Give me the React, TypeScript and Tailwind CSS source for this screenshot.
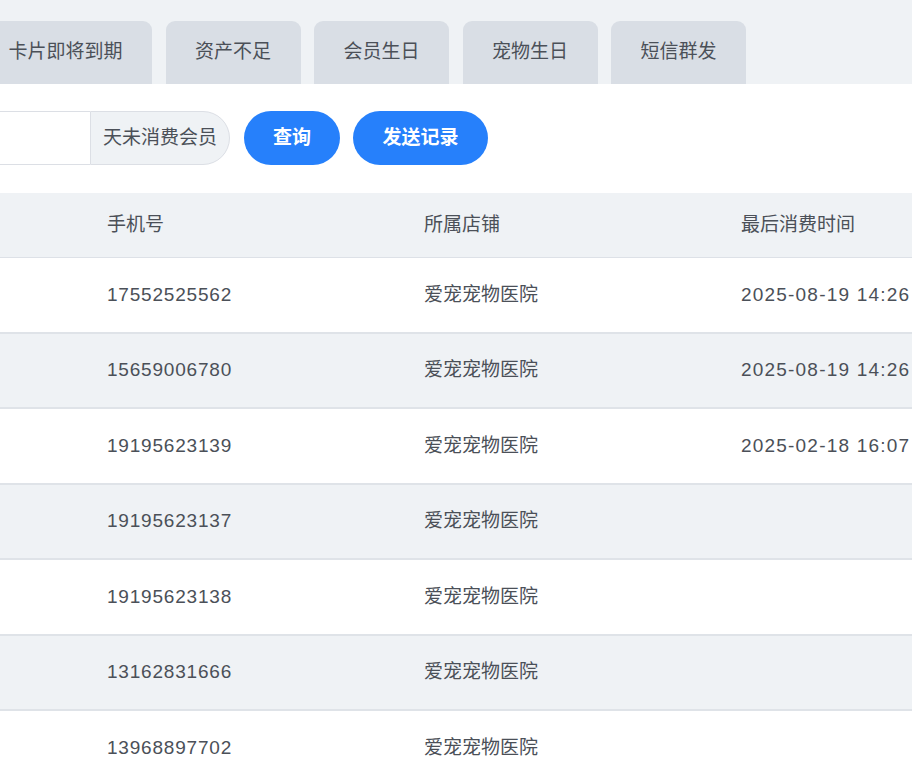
import React from "react";

const font = { fontFamily: '"Liberation Sans", "Noto Sans CJK SC", sans-serif' };

const tabs = ["卡片即将到期", "资产不足", "会员生日", "宠物生日", "短信群发"];

const rows = [
  { phone: "17552525562", time: "2025-08-19 14:26" },
  { phone: "15659006780", time: "2025-08-19 14:26" },
  { phone: "19195623139", time: "2025-02-18 16:07" },
  { phone: "19195623137", time: "" },
  { phone: "19195623138", time: "" },
  { phone: "13162831666", time: "" },
  { phone: "13968897702", time: "" },
];

export default function App() {
  return (
    <div
      className="w-[912px] h-[780px] overflow-hidden bg-white text-[19px] text-[#4b5058]"
      style={font}
    >
      <div className="h-[84px] bg-[#eff2f5] flex items-end gap-[13.5px] -ml-[21px]">
        {tabs.map((t) => (
          <div
            key={t}
            className="h-[63px] px-[29.5px] flex items-center rounded-t-[9px] bg-[#d9dee5] whitespace-nowrap"
          >
            {t}
          </div>
        ))}
      </div>

      <div className="flex items-center pt-[27px]">
        <div className="flex h-[54px] -ml-[40px]">
          <div className="w-[130px] border border-r-0 border-[#dcdfe5] bg-white" />
          <div className="flex items-center pl-[12px] pr-[12px] bg-[#eff2f5] border border-[#dcdfe5] rounded-r-full whitespace-nowrap">
            天未消费会员
          </div>
        </div>
        <button className="ml-[14px] h-[54px] w-[96px] rounded-full bg-[#2680fb] text-white font-bold">
          查询
        </button>
        <button className="ml-[13px] h-[54px] w-[135px] rounded-full bg-[#2680fb] text-white font-bold">
          发送记录
        </button>
      </div>

      <div className="mt-[28px]">
        <div className="grid grid-cols-[107px_317px_317px_1fr] items-center h-[65px] bg-[#eff2f5] border-b border-[#dde1e7]">
          <div />
          <div>手机号</div>
          <div>所属店铺</div>
          <div className="whitespace-nowrap">最后消费时间</div>
        </div>
        {rows.map((r, i) => (
          <div
            key={r.phone}
            className={
              "grid grid-cols-[107px_317px_317px_1fr] items-center h-[75.5px] border-b-2 border-[#dfe3e8] " +
              (i % 2 === 1 ? "bg-[#eff2f5]" : "bg-white")
            }
          >
            <div />
            <div className="tracking-[0.8px]">{r.phone}</div>
            <div>爱宠宠物医院</div>
            <div className="tracking-[1.2px] whitespace-nowrap">{r.time}</div>
          </div>
        ))}
      </div>
    </div>
  );
}
